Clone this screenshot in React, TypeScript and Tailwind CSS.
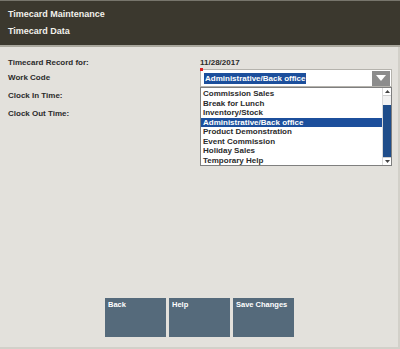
const workCodes = [
  'Commission Sales',
  'Break for Lunch',
  'Inventory/Stock',
  'Administrative/Back office',
  'Product Demonstration',
  'Event Commission',
  'Holiday Sales',
  'Temporary Help',
];

const selected = 'Administrative/Back office';

export default function App() {
  return (
    <div className="w-[400px] h-[349px] flex flex-col bg-[#e3e1dc] font-['Liberation_Sans',Arial,sans-serif] font-bold overflow-hidden">
      {/* Header */}
      <div className="h-[47px] shrink-0 bg-[#3b382e] border-t border-[#77756c] border-b-2 border-b-[#a9a79d] px-2 pt-[8px] text-[9px] leading-[11px] text-[#f2f1ec]">
        <div>Timecard Maintenance</div>
        <div className="mt-[6px]">Timecard Data</div>
      </div>

      {/* Body */}
      <div className="flex-1 flex flex-col border-r-2 border-b-2 border-[#d2d0c9] text-[8px] leading-[10px] text-[#2b2b2b]">
        <div className="flex items-center h-[10px] mt-[11px] pl-2">
          <div className="w-[192px]">Timecard Record for:</div>
          <div>11/28/2017</div>
        </div>

        <div className="flex items-center h-[18px] mt-[1px] pl-2">
          <div className="w-[192px]">Work Code</div>
          <div className="relative w-[192px] h-[18px] bg-white border border-[#b5b3ad] flex items-center pl-[3px]">
            <span className="absolute -left-px -top-[2px] w-[3px] h-[3px] bg-[#e02020]" />
            <span className="bg-[#1c4f9c] text-white px-[1px] leading-[11px]">{selected}</span>
            <div className="ml-auto mr-[1px] w-[18px] h-[15px] bg-[#8c8c8c] flex items-center justify-center">
              <svg width="10" height="6" viewBox="0 0 10 6">
                <path d="M0 0h10L5 6z" fill="#ffffff" />
              </svg>
            </div>

            {/* open list */}
            <div className="absolute left-[-1px] top-[17px] w-[192px] h-[79px] bg-white border border-[#7f7f7f] flex z-10">
              <div className="flex-1 flex flex-col pt-[1px]">
                {workCodes.map((c) => (
                  <div
                    key={c}
                    className={`h-[9.5px] leading-[9.5px] pl-[2px] ${
                      c === selected ? 'bg-[#1c4f9c] text-white' : 'text-[#2b2b2b]'
                    }`}
                  >
                    {c}
                  </div>
                ))}
              </div>
              <div className="w-[9px] flex flex-col bg-[#f2f2f2] border-l border-[#d8d8d8]">
                <div className="h-[8px] flex items-center justify-center border-b border-[#cfcfcf] bg-white">
                  <svg width="5" height="3" viewBox="0 0 5 3">
                    <path d="M0 3h5L2.5 0z" fill="#444" />
                  </svg>
                </div>
                <div className="h-[9px]" />
                <div className="flex-1 bg-[#1f4d8a]" />
                <div className="h-[8px] flex items-center justify-center border-t border-[#cfcfcf] bg-white">
                  <svg width="5" height="3" viewBox="0 0 5 3">
                    <path d="M0 0h5L2.5 3z" fill="#444" />
                  </svg>
                </div>
              </div>
            </div>
          </div>
        </div>

        <div className="flex items-center h-[10px] mt-[4px] pl-2">Clock In Time:</div>
        <div className="flex items-center h-[10px] mt-[8px] pl-2">Clock Out Time:</div>

        {/* Buttons */}
        <div className="mt-auto mb-[10px] flex justify-center gap-[3px] pl-[1px]">
          {['Back', 'Help', 'Save Changes'].map((b) => (
            <button
              key={b}
              className="w-[61px] h-[39px] bg-[#556a7b] text-white text-[7.5px] leading-[9px] text-left px-[3px] pt-[2px] flex"
            >
              {b}
            </button>
          ))}
        </div>
      </div>
    </div>
  );
}
